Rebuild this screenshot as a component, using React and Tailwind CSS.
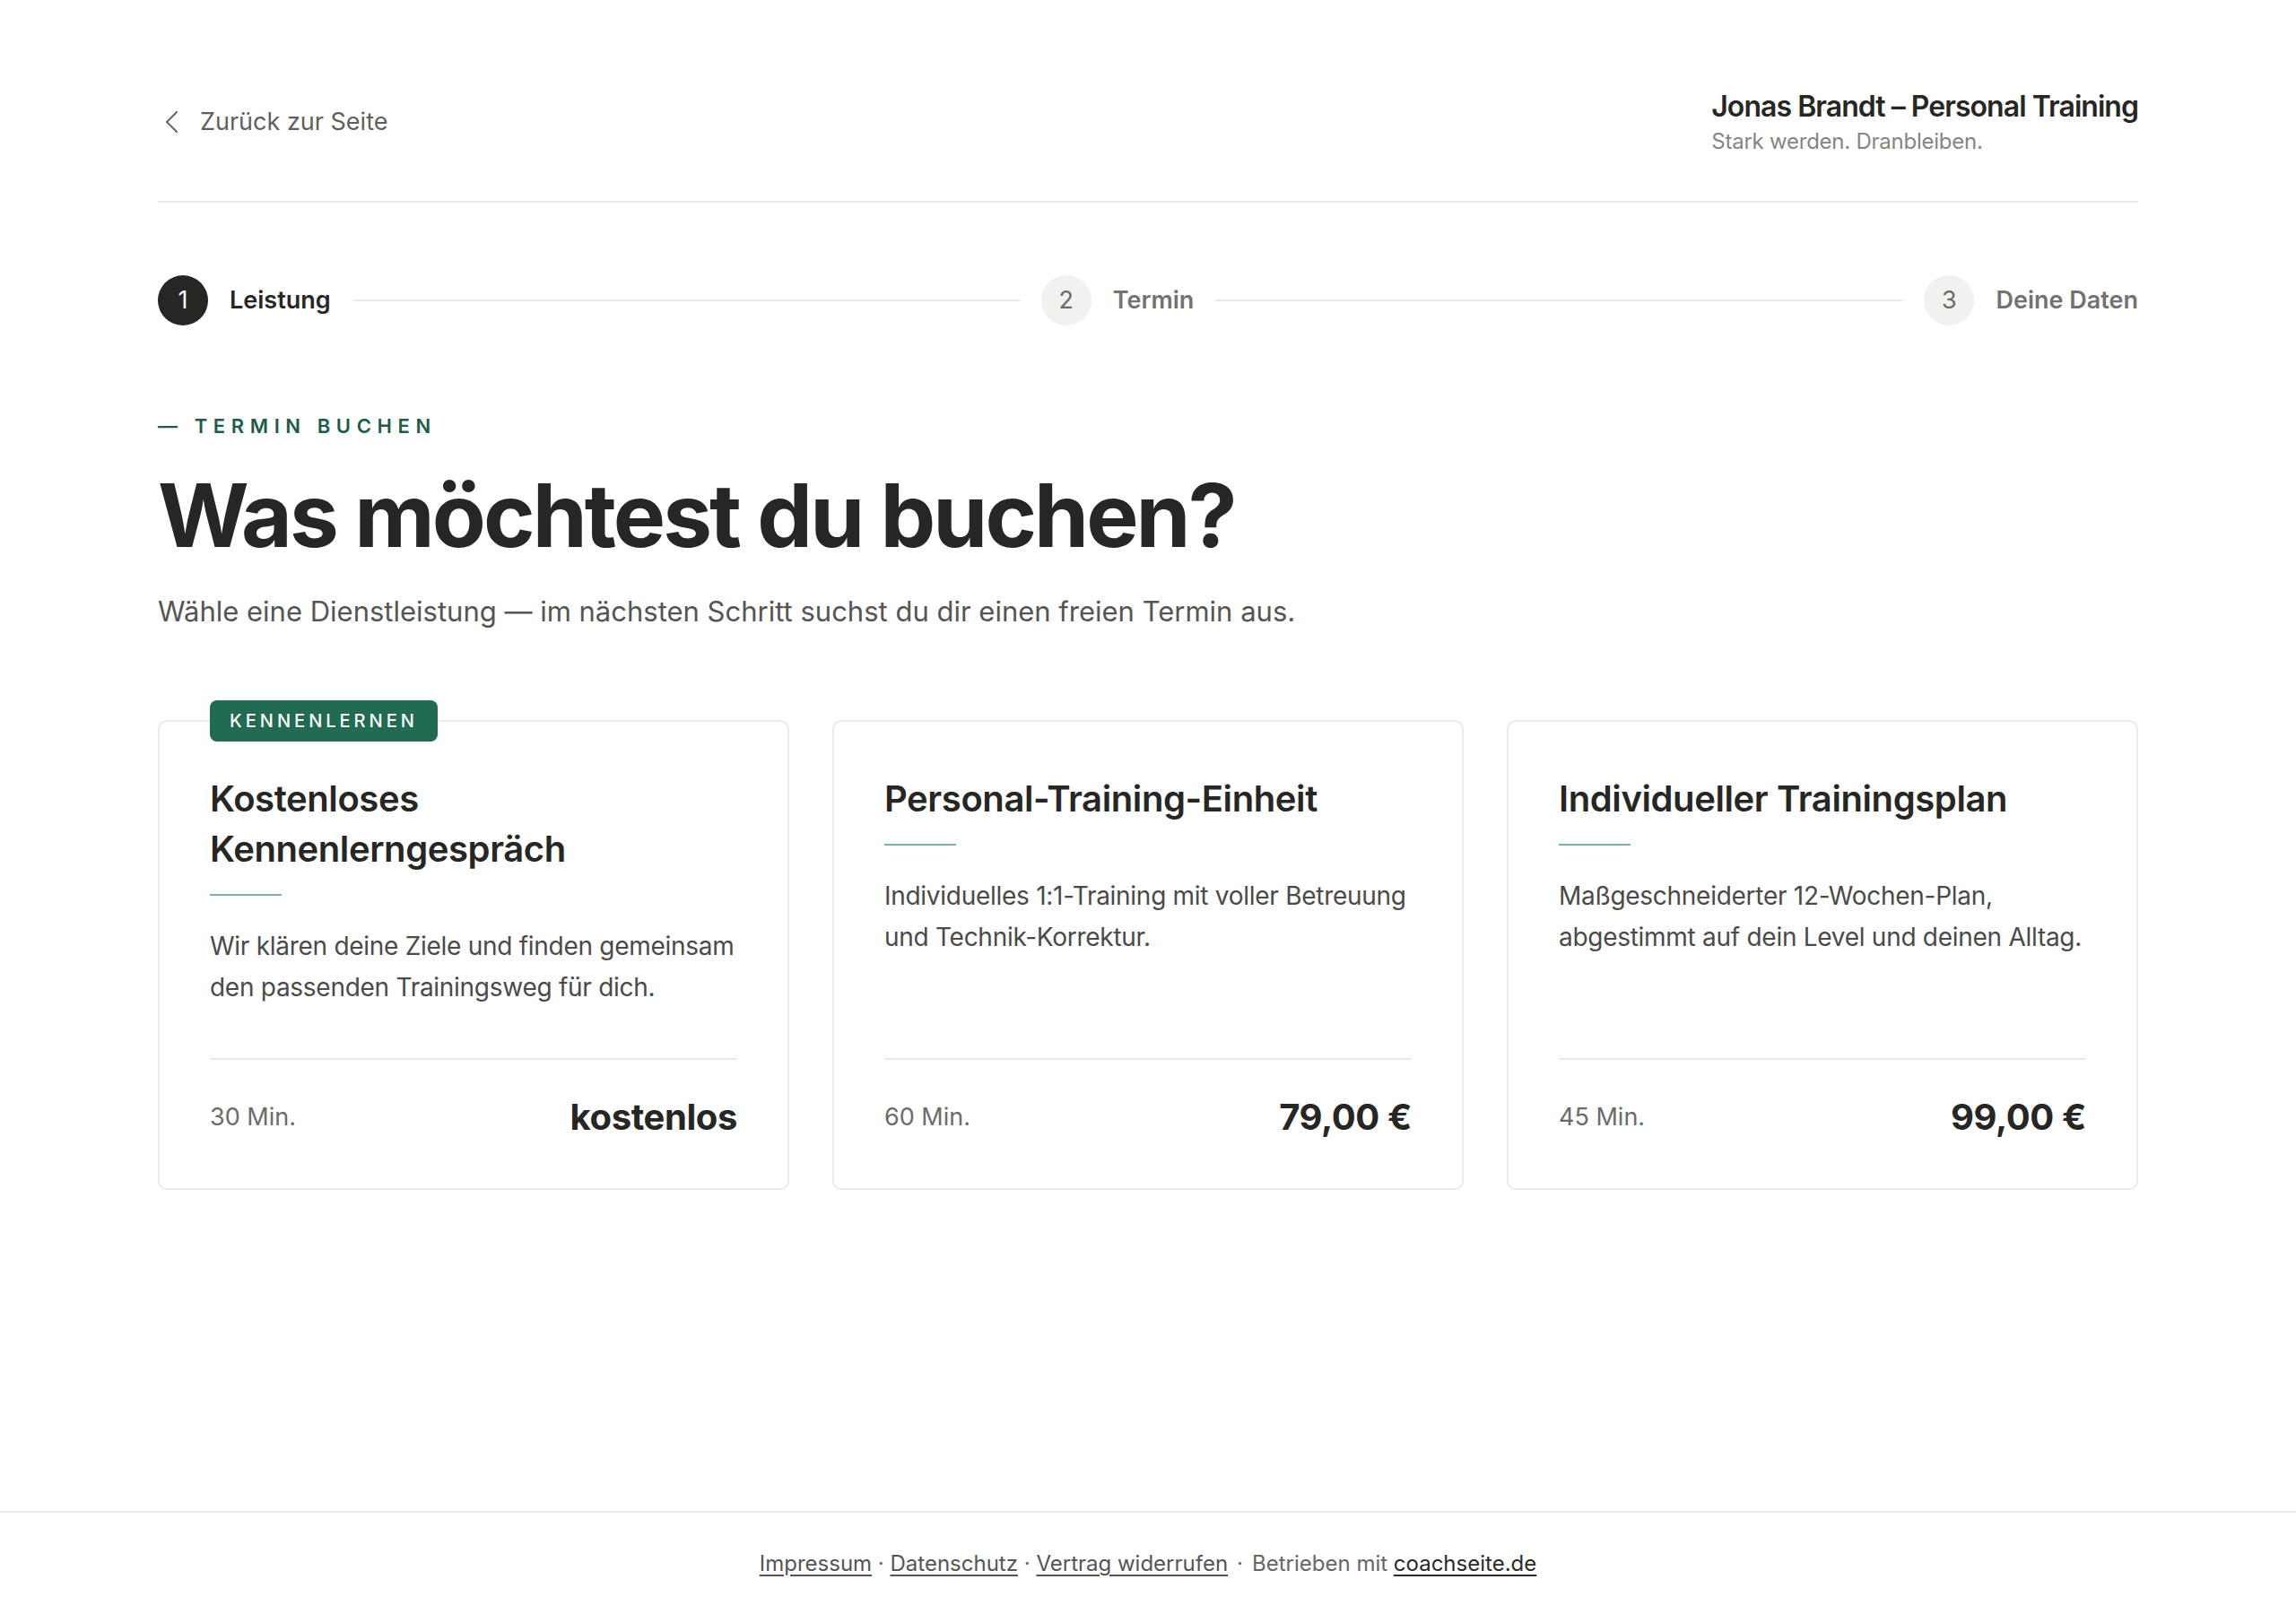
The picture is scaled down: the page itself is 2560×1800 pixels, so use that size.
const services = [
    {
        id: 'kennenlernen',
        badge: 'Kennenlernen',
        title: 'Kostenloses Kennenlerngespräch',
        description: 'Wir klären deine Ziele und finden gemeinsam den passenden Trainingsweg für dich.',
        duration: '30 Min.',
        price: 'kostenlos',
    },
    {
        id: 'einheit',
        title: 'Personal-Training-Einheit',
        description: 'Individuelles 1:1-Training mit voller Betreuung und Technik-Korrektur.',
        duration: '60 Min.',
        price: '79,00 €',
    },
    {
        id: 'plan',
        title: 'Individueller Trainingsplan',
        description: 'Maßgeschneiderter 12-Wochen-Plan, abgestimmt auf dein Level und deinen Alltag.',
        duration: '45 Min.',
        price: '99,00 €',
    },
];

const steps = [
    { nr: 1, label: 'Leistung' },
    { nr: 2, label: 'Termin' },
    { nr: 3, label: 'Deine Daten' },
];

const ChevronLeft = () => (
    <svg width="16" height="26" viewBox="0 0 16 26" fill="none" stroke="#6b6b68" strokeWidth="2.2" strokeLinecap="round" strokeLinejoin="round">
        <polyline points="14,2 3,13 14,24" />
    </svg>
);

const Stepper = ({ active = 1 }) => (
    <div className="flex items-center gap-6 mt-[81px]">
        {steps.map((step, i) => (
            <div key={step.nr} className={`flex items-center gap-6 ${i < steps.length - 1 ? 'flex-1' : ''}`}>
                <div
                    className={`w-14 h-14 rounded-full flex items-center justify-center text-[27px] ${step.nr === active ? 'bg-[#262624] text-white' : 'bg-[#eff2ef] text-[#6b6b68]'}`}
                >
                    {step.nr}
                </div>
                <span className={`text-[27px] font-semibold ${step.nr === active ? 'text-[#262624]' : 'text-[#727270]'}`}>
                    {step.label}
                </span>
                {i < steps.length - 1 && <div className="flex-1 h-[2px] bg-[#ebe9e1]" />}
            </div>
        ))}
    </div>
);

const ServiceCard = ({ service }) => (
    <div className="relative flex flex-col rounded-[10px] border-2 border-[#ecebe5] bg-white pt-[58px] px-[56px] pb-[55px]">
        {service.badge && (
            <span className="absolute -top-[24px] left-[56px] h-[46px] px-[22px] flex items-center rounded-[8px] bg-[#206b52] text-white text-[20px] font-medium uppercase tracking-[0.2em]">
                {service.badge}
            </span>
        )}
        <h3 className="text-[40px] leading-[56px] font-semibold tracking-[-0.01em] text-[#262624]">{service.title}</h3>
        <div className="mt-[22px] w-[80px] h-[2px] bg-[#7fb3a3]" />
        <p className="mt-[33px] text-[28px] leading-[46px] tracking-[-0.01em] text-[#4a4a48]">{service.description}</p>
        <div className="mt-auto pt-[56px]">
            <div className="border-t-2 border-[#ebe9e3] pt-[40px] flex items-center justify-between">
                <span className="text-[27px] text-[#6b6b68]">{service.duration}</span>
                <span className="text-[40px] leading-[48px] font-bold tracking-[-0.01em] text-[#262624]">{service.price}</span>
            </div>
        </div>
    </div>
);

export default function App() {
    return (
        <div className="min-h-screen flex flex-col bg-white font-['Inter',sans-serif] text-[#262624]">
            <main className="flex-1 w-full max-w-[2208px] mx-auto">
                {/* Header */}
                <header className="flex items-center justify-between pt-[99px] pb-[51px] border-b-2 border-[#ebe9e3]">
                    <a href="#" className="flex items-center gap-[24px] pl-[7px] text-[27px] text-[#5f5f5c]">
                        <ChevronLeft />
                        Zurück zur Seite
                    </a>
                    <div>
                        <div className="text-[32px] leading-[40px] font-semibold tracking-[-0.03em] text-[#262624]">
                            Jonas Brandt – Personal Training
                        </div>
                        <div className="mt-[4px] text-[24px] leading-[30px] tracking-[-0.01em] text-[#858582]">
                            Stark werden. Dranbleiben.
                        </div>
                    </div>
                </header>

                <Stepper active={1} />

                {/* Intro */}
                <div className="mt-[97px] text-[22px] leading-[30px] font-semibold uppercase tracking-[0.3em] text-[#1f5c47]">
                    — Termin buchen
                </div>
                <h1 className="mt-[32px] text-[98px] leading-[106px] font-bold tracking-[-0.03em] text-[#262624]">
                    Was möchtest du buchen?
                </h1>
                <p className="mt-[32px] text-[31px] leading-[44px] text-[#555553]">
                    Wähle eine Dienstleistung — im nächsten Schritt suchst du dir einen freien Termin aus.
                </p>

                {/* Services */}
                <div className="mt-[99px] grid grid-cols-3 gap-12">
                    {services.map((service) => (
                        <ServiceCard key={service.id} service={service} />
                    ))}
                </div>
            </main>

            <footer className="border-t-2 border-[#ebe9e3] py-[40px] text-center text-[24px] leading-[33px] text-[#666663]">
                <a href="#" className="underline underline-offset-4 text-[#555553]">Impressum</a>
                <span> · </span>
                <a href="#" className="underline underline-offset-4 text-[#555553]">Datenschutz</a>
                <span> · </span>
                <a href="#" className="underline underline-offset-4 text-[#555553]">Vertrag widerrufen</a>
                <span className="mx-[10px]">·</span>
                Betrieben mit{' '}
                <a href="#" className="underline underline-offset-4 text-[#2a2a28]">coachseite.de</a>
            </footer>
        </div>
    );
}
